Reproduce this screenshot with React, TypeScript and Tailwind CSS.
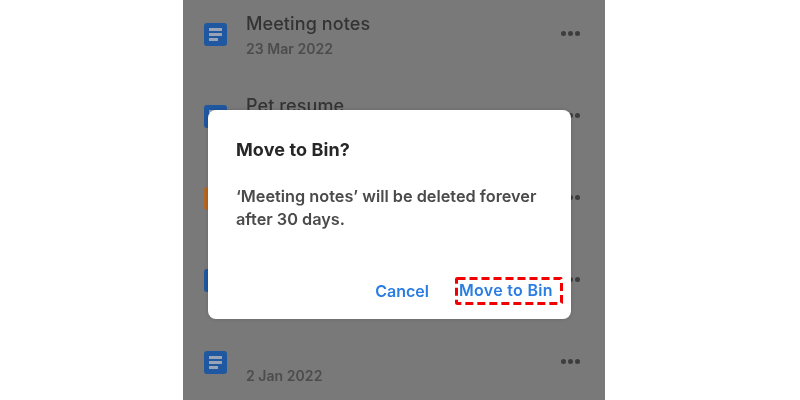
function DocIcon({ color = "bg-[#1f57a0]" }: { color?: string }) {
  return (
    <div className={`flex h-[23px] w-[23px] shrink-0 flex-col justify-center gap-[2.5px] rounded-[3px] px-[5px] ${color}`}>
      <div className="h-[2.5px] w-full bg-[#98a3b3]" />
      <div className="h-[2.5px] w-full bg-[#98a3b3]" />
      <div className="h-[2.5px] w-[9px] bg-[#98a3b3]" />
    </div>
  );
}

function Dots() {
  return (
    <div className="mt-[8px] flex gap-[2px]">
      <div className="h-[5px] w-[5px] rounded-full bg-[#3d3d3d]" />
      <div className="h-[5px] w-[5px] rounded-full bg-[#3d3d3d]" />
      <div className="h-[5px] w-[5px] rounded-full bg-[#3d3d3d]" />
    </div>
  );
}

function Row({ title, date, color }: { title?: string; date?: string; color?: string }) {
  return (
    <div className="flex h-[82px] items-start pr-[25px] blur-[0.4px]">
      <DocIcon color={color} />
      <div className="relative ml-[19px] flex-1">
        {title && <div className="-mt-[10px] text-[18px] leading-[22px] font-medium tracking-[0.1px] text-[#333333]">{title}</div>}
        {date && (
          <div className={`text-[14px] leading-[18px] font-semibold tracking-[0.05px] text-[#4c4c4c] ${title ? "mt-[5px]" : "mt-[7px] pt-[9px]"}`}>
            {date}
          </div>
        )}
      </div>
      <Dots />
    </div>
  );
}

export default function App() {
  return (
    <div className="flex h-[400px] w-[800px] justify-center overflow-hidden bg-white font-['Inter',sans-serif]">
      <div className="relative ml-[-12px] h-[400px] w-[422px] overflow-hidden bg-[#797979] pt-[23px] pl-[21px]">
        <Row title="Meeting notes" date="23 Mar 2022" />
        <Row title="Pet resume" />
        <Row color="bg-[#b5661f]" />
        <Row />
        <Row date="2 Jan 2022" />
        <div className="absolute top-[110px] left-[25px] flex h-[209px] w-[363px] flex-col rounded-[8px] bg-white pt-[28px] pr-[8px] pl-[28px] shadow-[0_0_4px_rgba(0,0,0,0.15)]">
          <div className="text-[18px] leading-[24px] font-bold tracking-[0.1px] text-[#262626] blur-[0.3px]">Move to Bin?</div>
          <p className="mt-[23px] text-[16.3px] leading-[23px] font-semibold text-[#4a4a4a] blur-[0.3px]">
            ‘Meeting notes’ will be deleted forever
            <br />
            after 30 days.
          </p>
          <div className="mt-auto mb-[14px] flex items-center justify-end gap-[26px] text-[16px] font-semibold text-[#2a7de1]">
            <span className="blur-[0.3px]">Cancel</span>
            <div className="relative h-[28px] w-[108px] pl-[4px] text-[16px] leading-[27px] tracking-[0.3px]">
              <span className="blur-[0.3px]">Move to Bin</span>
              <svg className="absolute top-0 left-0" width="108" height="28" viewBox="0 0 108 28" fill="none">
                <rect x="1.5" y="1.5" width="105" height="25" rx="1" stroke="#f00000" strokeWidth="3" strokeDasharray="8 4" />
              </svg>
            </div>
          </div>
        </div>
      </div>
    </div>
  );
}
